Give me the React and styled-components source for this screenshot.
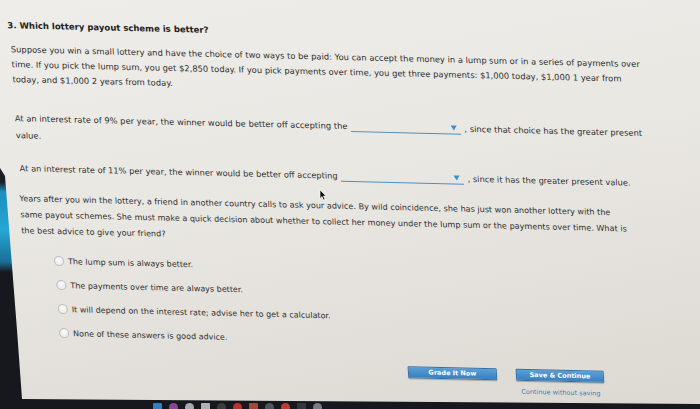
import React from 'react';
import styled, { createGlobalStyle } from 'styled-components';

const GlobalStyle = createGlobalStyle`
	html, body {
		margin: 0;
		padding: 0;
		background: #15171c;
	}
	body {
		font-family: 'DejaVu Sans', Verdana, sans-serif;
	}
`;

const Frame = styled.div`
	position: relative;
	width: 700px;
	height: 409px;
	overflow: hidden;
	background: linear-gradient(
		to bottom,
		#1a1d24 0,
		#1a1d24 182px,
		#1c8fbf 192px,
		#26a6d6 230px,
		#1a6f95 262px,
		#16181d 272px
	);
`;

const Screen = styled.div`
	width: 700px;
	height: 409px;
	background: linear-gradient(170deg, #eeede9 0%, #e9e7e2 45%, #dcd9d3 100%);
	clip-path: polygon(0 0, 700px 0, 700px 404px, 22px 399px, 17px 330px, 5px 176px, 0 168px);
`;

// the photo is taken at an angle: the page leans toward the bottom right
const Sheet = styled.div`
	padding: 19px 0 0 8px;
	transform: skew(3.3deg, 1.35deg);
	transform-origin: 0 0;
	color: #303030;
`;

const Title = styled.div`
	margin-left: -2px;
	font-size: 8.5px;
	font-weight: bold;
	line-height: 12px;
	color: #222;
`;

const Para = styled.p`
	margin: ${({ $top }) => $top}px 0 0 ${({ $indent }) => $indent || 0}px;
	width: ${({ $width }) => $width}px;
	font-size: ${({ $size }) => $size}px;
	line-height: ${({ $lh }) => $lh}px;
`;

const Blank = styled.span`
	position: relative;
	display: inline-block;
	vertical-align: -3px;
	width: ${({ $width }) => $width}px;
	height: 10px;
	margin: 0 4px 0 3px;
	border-bottom: 1px solid #4b8fc6;

	&::after {
		content: '';
		position: absolute;
		right: 4px;
		top: 2px;
		border-left: 3.5px solid transparent;
		border-right: 3.5px solid transparent;
		border-top: 5px solid #3d8fd0;
	}
`;

const Options = styled.div`
	display: flex;
	flex-direction: column;
	margin: 10px 0 0 31px;
	font-size: 8px;
`;

const Option = styled.label`
	display: flex;
	align-items: center;
	gap: 4px;
	height: 24px;
	margin-left: ${({ $shift }) => $shift}px;
`;

const Radio = styled.span`
	width: 8px;
	height: 8px;
	border-radius: 50%;
	border: 1px solid #bdbdbd;
	background: radial-gradient(circle at 50% 35%, #fbfbfb, #e4e4e4);
	flex: none;
`;

const ButtonBar = styled.div`
	display: flex;
	gap: 19px;
	margin: 13px 0 0 379px;
`;

const Column = styled.div`
	display: flex;
	flex-direction: column;
	align-items: center;
	gap: 6px;
`;

const Button = styled.button`
	width: ${({ $width }) => $width}px;
	height: 12px;
	padding: 0;
	border: 1px solid #2f6fa6;
	border-radius: 1px;
	background: linear-gradient(to bottom, #5a9fd6, #3a80c0);
	box-shadow: 0 1px 1px rgba(0, 0, 0, 0.25);
	color: #fff;
	font-family: 'DejaVu Sans', Verdana, sans-serif;
	font-size: 6.5px;
	font-weight: bold;
	line-height: 10px;
`;

const Link = styled.a`
	color: #3f7db3;
	font-size: 6.5px;
	line-height: 10px;
	text-decoration: none;
`;

const Cursor = styled.svg`
	position: absolute;
	left: 319px;
	top: 189px;
`;

const Dock = styled.div`
	position: absolute;
	left: 153px;
	top: 403px;
	display: flex;
	gap: 7px;
`;

const DockIcon = styled.span`
	width: 9px;
	height: 9px;
	border-radius: ${({ $round }) => ($round ? '50%' : '1px')};
	background: ${({ $color }) => $color};
	opacity: 0.85;
`;

const dockIcons = [
	{ color: '#3c8fd8' },
	{ color: '#9a4fa8', round: true },
	{ color: '#bfc3c8', round: true },
	{ color: '#c9ccd0' },
	{ color: '#444', round: true },
	{ color: '#d63a2e', round: true },
	{ color: '#c84a3f' },
	{ color: '#5b5f66', round: true },
	{ color: '#d9452f', round: true },
	{ color: '#3a3d44' },
	{ color: '#8b8f96', round: true },
];

const options = [
	{ text: 'The lump sum is always better.', shift: 0 },
	{ text: 'The payments over time are always better.', shift: 1 },
	{ text: 'It will depend on the interest rate; advise her to get a calculator.', shift: 1 },
	{ text: 'None of these answers is good advice.', shift: 1 },
];

export default function App() {
	return (
		<Frame>
			<GlobalStyle />
			<Screen>
				<Sheet>
					<Title>3. Which lottery payout scheme is better?</Title>
					<Para $top={11} $width={634} $size={8.35} $lh={15}>
						Suppose you win a small lottery and have the choice of two ways to be paid: You can
						accept the money in a lump sum or in a series of payments over time. If you pick the lump
						sum, you get $2,850 today. If you pick payments over time, you get three payments: $1,000
						today, $1,000 1 year from today, and $1,000 2 years from today.
					</Para>
					<Para $top={23} $width={635} $size={8.35} $lh={17}>
						At an interest rate of 9% per year, the winner would be better off accepting the
						<Blank $width={110} />, since that choice has the greater present value.
					</Para>
					<Para $top={16} $width={640} $size={8.25} $lh={17} $indent={2}>
						At an interest rate of 11% per year, the winner would be better off accepting
						<Blank $width={123} />, since it has the greater present value.
					</Para>
					<Para $top={13} $width={610} $size={8.1} $lh={16}>
						Years after you win the lottery, a friend in another country calls to ask your advice. By
						wild coincidence, she has just won another lottery with the same payout schemes. She must
						make a quick decision about whether to collect her money under the lump sum or the
						payments over time. What is the best advice to give your friend?
					</Para>
					<Options>
						{options.map(({ text, shift }) => (
							<Option key={text} $shift={shift}>
								<Radio />
								{text}
							</Option>
						))}
					</Options>
					<ButtonBar>
						<Button $width={89}>Grade It Now</Button>
						<Column>
							<Button $width={88}>Save &amp; Continue</Button>
							<Link href="#">Continue without saving</Link>
						</Column>
					</ButtonBar>
				</Sheet>
			</Screen>
			<Cursor width="8" height="12" viewBox="0 0 8 12">
				<path d="M1 1 L1 9.5 L3 7.6 L4.6 11 L6 10.3 L4.4 7 L7 7 Z" fill="#111" stroke="#fff" strokeWidth="0.6" />
			</Cursor>
			<Dock>
				{dockIcons.map(({ color, round }, i) => (
					<DockIcon key={i} $color={color} $round={round} />
				))}
			</Dock>
		</Frame>
	);
}
